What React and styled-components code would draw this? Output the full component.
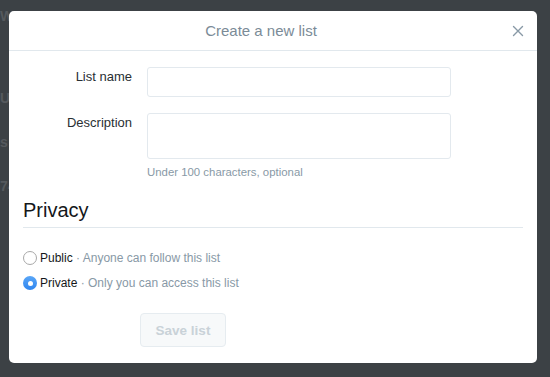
import React from "react";
import styled, { createGlobalStyle } from "styled-components";

const GlobalStyle = createGlobalStyle`
  html, body {
    margin: 0;
    padding: 0;
    background: #3c4145;
  }
  body {
    font-family: "Liberation Sans", Arial, sans-serif;
  }
`;

const Page = styled.div`
  position: relative;
  width: 550px;
  height: 377px;
  overflow: hidden;
  background: #3c4145;
`;

const Behind = styled.div`
  display: flex;
  flex-direction: column;
  gap: 28px;
  padding: 8px 0 0 0;
  color: #55595d;
  font-size: 14px;
  line-height: 16px;
  font-weight: bold;
  & > span:first-child {
    margin-bottom: 38px;
  }
`;

const Modal = styled.div`
  position: absolute;
  left: 9px;
  top: 11px;
  width: 528px;
  height: 352px;
  background: #fff;
  border-radius: 5px;
  display: flex;
  flex-direction: column;
  box-sizing: border-box;
`;

const Header = styled.div`
  height: 39px;
  border-bottom: 1px solid #e1e8ed;
  display: flex;
  align-items: center;
  justify-content: center;
  padding-right: 24px;
  position: relative;
`;

const Title = styled.h3`
  margin: 0;
  font-size: 15px;
  font-weight: normal;
  color: #7b8b97;
`;

const Close = styled.button`
  position: absolute;
  right: 13px;
  top: 14px;
  width: 12px;
  height: 12px;
  padding: 0;
  border: 0;
  background: none;
  display: flex;
`;

const Body = styled.div`
  padding: 16px 14px 16px;
  display: flex;
  flex-direction: column;
`;

const FormGrid = styled.div`
  display: grid;
  grid-template-columns: 109px 304px;
  column-gap: 15px;
  row-gap: 16px;
`;

const Label = styled.label`
  text-align: right;
  font-size: 13px;
  color: #292f33;
  padding-top: 2px;
  line-height: 16px;
`;

const Field = styled.div`
  display: flex;
  flex-direction: column;
`;

const Input = styled.div`
  box-sizing: border-box;
  height: ${({ $tall }) => ($tall ? "46px" : "30px")};
  border: 1px solid #e3e9ee;
  border-radius: 3px;
  background: #fff;
`;

const Help = styled.div`
  margin-top: 6px;
  font-size: 11.4px;
  color: #8899a6;
  line-height: 14px;
`;

const SectionTitle = styled.h2`
  margin: 19px 0 0;
  padding-bottom: 5px;
  font-size: 20px;
  line-height: 24px;
  font-weight: normal;
  color: #14171a;
  border-bottom: 1px solid #e1e8ed;
`;

const Options = styled.div`
  display: flex;
  flex-direction: column;
  gap: 9px;
  margin-top: 22px;
`;

const Option = styled.div`
  display: flex;
  align-items: center;
  gap: 3px;
  font-size: 12px;
  line-height: 16px;
  color: #14171a;
`;

const Radio = styled.span`
  box-sizing: border-box;
  width: 14px;
  height: 14px;
  border-radius: 50%;
  display: flex;
  align-items: center;
  justify-content: center;
  border: ${({ $checked }) => ($checked ? "none" : "1px solid #a8a8a8")};
  background: ${({ $checked }) =>
    $checked ? "linear-gradient(#5aa6f7, #2f86f0)" : "#fff"};
  &::after {
    content: "";
    display: ${({ $checked }) => ($checked ? "block" : "none")};
    width: 5px;
    height: 5px;
    border-radius: 50%;
    background: #fff;
  }
`;

const Muted = styled.span`
  color: #8899a6;
`;

const Actions = styled.div`
  display: flex;
  margin-top: 22px;
  padding-left: 117px;
`;

const SaveButton = styled.button`
  width: 86px;
  height: 34px;
  border: 1px solid #e6ecf0;
  border-radius: 4px;
  background: #f7f9fa;
  color: #c9d2d8;
  font-family: "Liberation Sans", Arial, sans-serif;
  font-weight: bold;
  font-size: 13.5px;
  padding: 0;
`;

export default function App() {
  return (
    <>
      <GlobalStyle />
      <Page>
        <Behind>
          <span>W</span>
          <span>U</span>
          <span>s</span>
          <span>74</span>
        </Behind>
        <Modal>
          <Header>
            <Title>Create a new list</Title>
            <Close aria-label="Close">
              <svg width="12" height="12" viewBox="0 0 12 12">
                <path
                  d="M1.5 1.5 L10.5 10.5 M10.5 1.5 L1.5 10.5"
                  stroke="#8899a6"
                  strokeWidth="1.4"
                  strokeLinecap="round"
                />
              </svg>
            </Close>
          </Header>
          <Body>
            <FormGrid>
              <Label>List name</Label>
              <Field>
                <Input />
              </Field>
              <Label>Description</Label>
              <Field>
                <Input $tall />
                <Help>Under 100 characters, optional</Help>
              </Field>
            </FormGrid>
            <SectionTitle>Privacy</SectionTitle>
            <Options>
              <Option>
                <Radio />
                <span>
                  Public <Muted>· Anyone can follow this list</Muted>
                </span>
              </Option>
              <Option>
                <Radio $checked />
                <span>
                  Private <Muted>· Only you can access this list</Muted>
                </span>
              </Option>
            </Options>
            <Actions>
              <SaveButton>Save list</SaveButton>
            </Actions>
          </Body>
        </Modal>
      </Page>
    </>
  );
}
